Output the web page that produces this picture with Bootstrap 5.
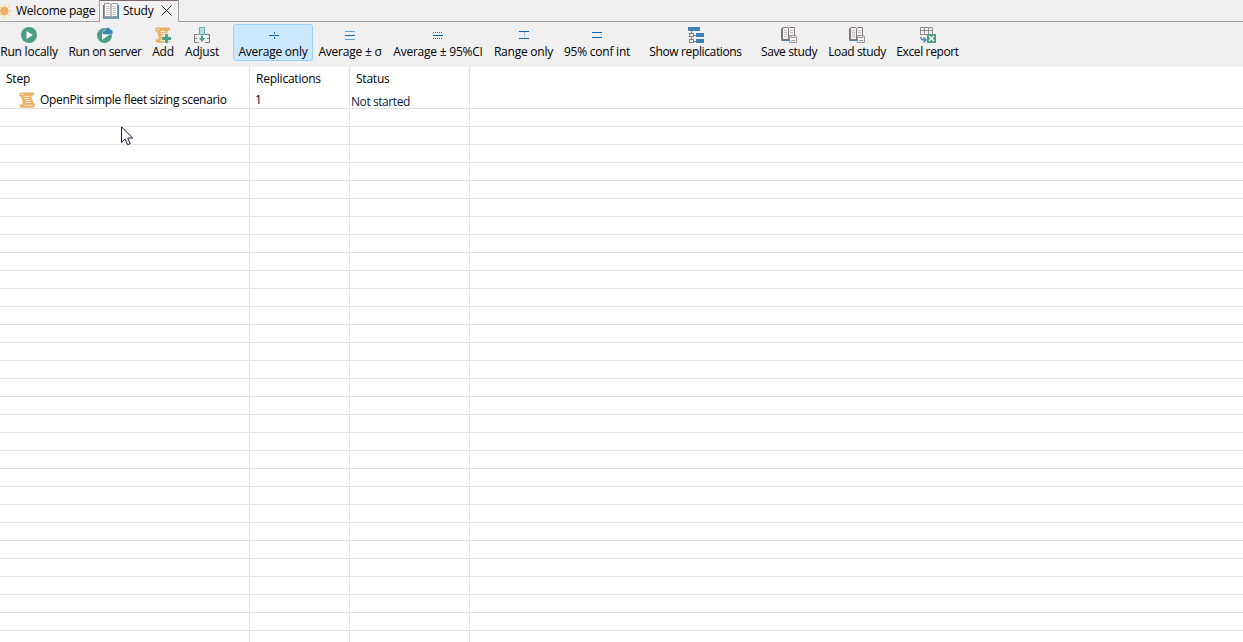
<!DOCTYPE html>
<html lang="en">
<head>
<meta charset="utf-8">
<title>Study</title>
<link rel="stylesheet" href="https://cdn.jsdelivr.net/npm/bootstrap@5.3.0/dist/css/bootstrap.min.css">
<style>
body{font:12px/16px "Open Sans","Noto Sans",sans-serif;color:#000;background:#fff;overflow:hidden;height:642px;letter-spacing:-.23px}
svg{display:block;flex:none}
.tabs{height:22px;background:#f0f0f0}
.tab-item{border-bottom:1px solid #a0a0a0;white-space:nowrap}
.tab-item.first{width:99px}
.tab-item.current{width:80px;border:1px solid #a0a0a0;border-top-color:#806a72;border-bottom:0;background:#f2f2f2}
.tools{display:grid;height:45px;background:#f0f0f0;padding-top:2px;grid-template-columns:58px 94px 22px 56px 83px 74px 102px 69px 78px 119px 68px 68px 73px}
.tool{height:37px;border:1px solid transparent;padding:2px 0 0;white-space:nowrap}
.tool span{margin-top:1px}
.tool.on{margin-left:3px;background:#cce8ff;border-color:#99d1ff;border-radius:3px}
.tool.on svg{margin-left:2px}
.tight{letter-spacing:-.37px}
.grid-table{table-layout:fixed;border-collapse:separate;border-spacing:0;width:1243px}
.grid-table th,.grid-table td{padding:0;height:18px;border-right:1px solid #e2e2e2;border-bottom:1px solid #e2e2e2;font-weight:400;white-space:nowrap;vertical-align:middle}
.grid-table th:last-child,.grid-table td:last-child{border-right:0}
.grid-table th{height:24px;border-bottom:0;padding-left:6px}
.grid-table .step{letter-spacing:-.32px}
.grid-table .state{padding:1px 0 0 1px;line-height:15px;letter-spacing:-.42px;color:#0b1d3a}
.grid-table .state span{display:block;height:15px;line-height:17px}
.cursor{left:121px;top:126px}
</style>
</head>
<body>
<svg width="0" height="0" class="position-absolute">
 <symbol id="book" viewBox="0 0 16 16"><path d="M.7 2v13h14.600V2" fill="none" stroke="#3d85b5" stroke-width="1.400"/><path d="M1.500.5h5L8 1.500 9.500.5h5v13h-5l-1.500.8-1.500-.8h-5z" fill="#fff" stroke="#9a9093"/><path d="M8 1.500v13" stroke="#83767a"/><path d="M3 3.500h3.500M3 5.500h3.500M3 7.500h3.500M3 9.500h3.500M3 11.500h3.500M9.500 3.500H13M9.500 5.500H13M9.500 7.500H13M9.500 9.500H13M9.500 11.500H13" stroke="#c4bec0"/></symbol>
 <symbol id="disk" viewBox="0 0 16 16"><path d="M.5 1.500V13.500H8" fill="none" stroke="#3d85b5"/><path d="M1.500.5h5l1 1 1-1h5V8M7.500 1.500v12M1.500 1v11.500H7M13.500 1v7" fill="none" stroke="#83767a"/><path d="M3 3.500h3M3 5.500h3M3 7.500h3M3 9.500h3M9 3.500h3M9 5.500h3" stroke="#c4bec0"/><path d="M8.500 8.500h6l1 1v6h-7z" fill="#f4f4f4" stroke="#9b9395"/><path d="M10 8.500h4v2h-4zM10 13.500h4" fill="none" stroke="#9b9395"/></symbol>
 <symbol id="scroll" viewBox="0 0 16 16"><path d="M2 .5h11.500c1.500 0 1.800 1.500 1.200 3h-2.200c-.5 2.800 1.800 5 1.800 7.500h1.200c.8 1.500 0 4.800-2 4.800H3.500C1.500 15.800.3 14.500.3 12.500h3C4.500 9.500 2.500 8 2.300 4.500H.8C-.2 3 .3.5 2 .5z" fill="#ebb266"/><path d="M2 2.500h2.500M5.500 4.500h5M5.500 6.500h5M6.500 8.500h5M7 10.500h5M5.500 13.200h8" stroke="#fff" stroke-width=".8" stroke-opacity=".9"/></symbol>
</svg>
<div class="tabs d-flex">
 <div class="tab-item first d-flex align-items-center">
  <svg width="13" height="16" viewBox="3 0 13 16"><path d="M7.500.5v15M0 8h15M2.500 3l10 10M12.500 3l-10 10" stroke="#f6dc9a" stroke-width="1.600" fill="none"/><circle cx="7.300" cy="8" r="4.200" fill="#ebb061"/></svg>
  <span style="margin-left:3px">Welcome page</span></div>
 <div class="tab-item current d-flex align-items-center">
  <svg width="16" height="16" style="margin:-2px 0 0 3px"><use href="#book"/></svg><span style="margin-left:4px;margin-top:-1px">Study</span>
  <svg width="11" height="11" viewBox="0 0 11 11" style="margin:-2px 0 0 8px"><path d="M.5.5l10 10M10.500.5l-10 10" stroke="#111" stroke-width=".9"/></svg></div>
 <div class="tab-item flex-grow-1"></div>
</div>
<div class="tools">
 <div class="tool d-flex flex-column align-items-center"><svg width="16" height="16"><circle cx="8" cy="8" r="8" fill="#4c9d87"/><path d="M5.500 4v8l6.500-4z" fill="#fff"/></svg><span>Run locally</span></div>
 <div class="tool d-flex flex-column align-items-center"><svg width="16" height="16"><circle cx="7.500" cy="8.500" r="7.500" fill="#4c9d87"/><path d="M5 6v7l7-5z" fill="#f0f0f0"/><path d="M6.500 7.500C4.500 6.500 5.500 3.500 8 3.500 8 0 12.500-.5 13.300 2.500c3.500.2 3.500 5 .2 5z" fill="#3b83b6" stroke="#f0f0f0" stroke-width=".5"/></svg><span class="tight">Run on server</span></div>
 <div class="tool d-flex flex-column align-items-center"><svg width="16" height="16"><use href="#scroll"/><path d="M11.500 6v10M6.500 11.500H16" stroke="#f0f0f0" stroke-width="4.400"/><path d="M11.500 7v9M7 11.500h9" stroke="#4c9d87" stroke-width="2.800"/></svg><span>Add</span></div>
 <div class="tool d-flex flex-column align-items-center"><svg width="16" height="16"><path d="M3 7.500H.5v8H3M13 7.500h2.500v8H13M.5 11.500H3M13 11.500h2.500M3.500 7.500H5M3.500 15.500H5M11 7.500h2M11 15.500h2" stroke="#84777b" fill="none"/><path d="M5.500.5h5v7h-5z" fill="#b7dce3" stroke="#62a8bd"/><path d="M8 8.500v4" stroke="#4c9d87" stroke-width="2"/><path d="M5 11h6l-3 4z" fill="#4c9d87"/></svg><span>Adjust</span></div>
 <div class="tool on d-flex flex-column align-items-center"><svg width="16" height="16" shape-rendering="crispEdges"><path d="M3 8.500h10" stroke="#0868b5"/><path d="M8.500 5v2M8.500 10v2" stroke="#0868b5"/></svg><span>Average only</span></div>
 <div class="tool d-flex flex-column align-items-center"><svg width="16" height="16" shape-rendering="crispEdges"><path d="M3 4.500h10M3 12.500h10" stroke="#64a2d2"/><path d="M3 8.500h10" stroke="#0868b5"/></svg><span>Average ± σ</span></div>
 <div class="tool d-flex flex-column align-items-center"><svg width="16" height="16" shape-rendering="crispEdges"><path d="M3 5.500h10M3 11.500h10" stroke="#0868b5" stroke-dasharray="1 1"/><path d="M3 8.500h10" stroke="#0868b5"/></svg><span>Average ± 95%CI</span></div>
 <div class="tool d-flex flex-column align-items-center"><svg width="16" height="16" shape-rendering="crispEdges"><path d="M3 4.500h10M3 11.500h10" stroke="#0868b5"/><path d="M8.500 5v6" stroke="#64a2d2" stroke-dasharray="1 1"/></svg><span>Range only</span></div>
 <div class="tool d-flex flex-column align-items-center"><svg width="16" height="16" shape-rendering="crispEdges"><path d="M3 5.500h10M3 10.500h10" stroke="#0868b5"/></svg><span>95% conf int</span></div>
 <div class="tool d-flex flex-column align-items-center"><svg width="16" height="16" shape-rendering="crispEdges"><path d="M0 0h12v4H0zM8 6h8v4H8zM8 12h8v4H8z" fill="#3b83b6"/><path d="M3.500 4v2M3.500 10v2M5 8.500h3M5 14.500h3M1.500 6.500h4v3h-4zM1.500 12.500h4v3h-4z" fill="none" stroke="#84777b"/></svg><span class="tight">Show replications</span></div>
 <div class="tool d-flex flex-column align-items-center"><svg width="16" height="16"><use href="#disk"/></svg><span class="tight">Save study</span></div>
 <div class="tool d-flex flex-column align-items-center"><svg width="16" height="16"><use href="#disk"/></svg><span class="tight">Load study</span></div>
 <div class="tool d-flex flex-column align-items-center"><svg width="16" height="16"><path d="M.5 8V.5h12V7M0 3.500h13M0 7.500h7M4.500 0v8M8.500 0v7" fill="none" stroke="#94898c"/><path d="M.7 10c0 2 1.300 3 4 3M3.500 10.500L6 13l-2.500 2.500" stroke="#3b83b6" stroke-width="1.400" fill="none"/><path d="M7 7h9v9H7z" fill="#4c9d87"/><path d="M9 9l5 5M14 9l-5 5" stroke="#fff" stroke-width="1.500"/></svg><span class="tight">Excel report</span></div>
</div>
<table class="grid-table">
 <colgroup><col style="width:250px"><col style="width:100px"><col style="width:120px"><col></colgroup>
 <thead><tr><th>Step</th><th>Replications</th><th>Status</th><th></th></tr></thead>
 <tbody id="rows"><tr><td class="step"><div class="d-flex align-items-center"><svg width="16" height="16" style="margin-left:19px"><use href="#scroll"/></svg><span style="margin-left:5px">OpenPit simple fleet sizing scenario</span></div></td><td style="padding-left:5px">1</td><td class="state"><span>Not started</span></td><td></td></tr></tbody>
</table>
<svg class="cursor position-absolute" width="13" height="20" viewBox="0 0 13 20"><path d="M.5.8v15.700l3.600-3.400 2.500 5.600 2.600-1.100-2.500-5.500h5z" fill="#fff" stroke="#17143c"/></svg>
<script src="https://cdn.jsdelivr.net/npm/bootstrap@5.3.0/dist/js/bootstrap.bundle.min.js"></script>
<script>
document.getElementById('rows').insertAdjacentHTML('beforeend','<tr><td></td><td></td><td></td><td></td></tr>'.repeat(30));
</script>
</body>
</html>
